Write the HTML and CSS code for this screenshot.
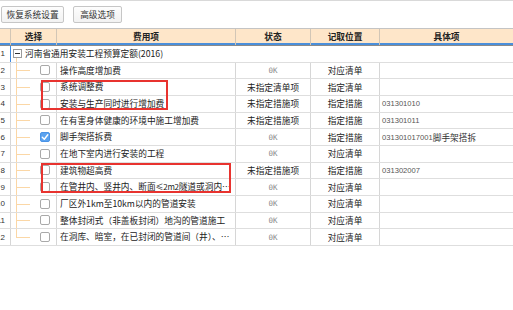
FILE: index.html
```html
<!DOCTYPE html>
<html lang="zh-CN">
<head>
<meta charset="utf-8">
<title>费用项设置</title>
<link rel="stylesheet" href="styles.css">
</head>
<body>
<div class="page">
  <div class="toolbar">
    <button class="btn btn-wide">恢复系统设置</button>
    <button class="btn btn-narrow">高级选项</button>
  </div>
  <div class="grid">
    <div class="row head">
      <div class="h"></div>
      <div class="h">选择</div>
      <div class="h">费用项</div>
      <div class="h">状态</div>
      <div class="h">记取位置</div>
      <div class="h">具体项</div>
    </div>
    <div class="row group">
      <div class="c num"><span>1</span></div>
      <div class="c grp"><span class="minus"></span><span class="grp-text">河南省通用安装工程预算定额(2016)</span></div>
    </div>
    <div class="row">
      <div class="c num"><span>2</span></div>
      <div class="c sel tree"><span class="cb"></span></div>
      <div class="c name">操作高度增加费</div>
      <div class="c status ok">0K</div>
      <div class="c pos">对应清单</div>
      <div class="c spec"></div>
    </div>
    <div class="row">
      <div class="c num"><span>3</span></div>
      <div class="c sel tree"><span class="cb"></span></div>
      <div class="c name">系统调整费</div>
      <div class="c status">未指定清单项</div>
      <div class="c pos">指定清单</div>
      <div class="c spec"></div>
    </div>
    <div class="row">
      <div class="c num"><span>4</span></div>
      <div class="c sel tree"><span class="cb"></span></div>
      <div class="c name">安装与生产同时进行增加费</div>
      <div class="c status">未指定措施项</div>
      <div class="c pos">指定措施</div>
      <div class="c spec">031301010</div>
    </div>
    <div class="row">
      <div class="c num"><span>5</span></div>
      <div class="c sel tree"><span class="cb"></span></div>
      <div class="c name">在有害身体健康的环境中施工增加费</div>
      <div class="c status">未指定措施项</div>
      <div class="c pos">指定措施</div>
      <div class="c spec">031301011</div>
    </div>
    <div class="row">
      <div class="c num"><span>6</span></div>
      <div class="c sel tree"><span class="cb checked"><svg viewBox="0 0 10 10" width="10" height="10"><path d="M2.3 5.2 L4.3 7.2 L7.8 2.8" fill="none" stroke="#fff" stroke-width="1.4" stroke-linecap="round" stroke-linejoin="round"/></svg></span></div>
      <div class="c name">脚手架搭拆费</div>
      <div class="c status ok">0K</div>
      <div class="c pos">指定措施</div>
      <div class="c spec">031301017001<span class="cjk">脚手架搭拆</span></div>
    </div>
    <div class="row">
      <div class="c num"><span>7</span></div>
      <div class="c sel tree"><span class="cb"></span></div>
      <div class="c name">在地下室内进行安装的工程</div>
      <div class="c status ok">0K</div>
      <div class="c pos">对应清单</div>
      <div class="c spec"></div>
    </div>
    <div class="row">
      <div class="c num"><span>8</span></div>
      <div class="c sel tree"><span class="cb"></span></div>
      <div class="c name">建筑物超高费</div>
      <div class="c status">未指定措施项</div>
      <div class="c pos">指定措施</div>
      <div class="c spec">031302007</div>
    </div>
    <div class="row">
      <div class="c num"><span>9</span></div>
      <div class="c sel tree"><span class="cb"></span></div>
      <div class="c name">在管井内、竖井内、断面<span class="sm">≤2m2</span>隧道或洞内进行安装的工程</div>
      <div class="c status ok">0K</div>
      <div class="c pos">对应清单</div>
      <div class="c spec"></div>
    </div>
    <div class="row">
      <div class="c num"><span>10</span></div>
      <div class="c sel tree"><span class="cb"></span></div>
      <div class="c name">厂区外1km至10km以内的管道安装</div>
      <div class="c status ok">0K</div>
      <div class="c pos">对应清单</div>
      <div class="c spec"></div>
    </div>
    <div class="row">
      <div class="c num"><span>11</span></div>
      <div class="c sel tree"><span class="cb"></span></div>
      <div class="c name">整体封闭式（非盖板封闭）地沟的管道施工</div>
      <div class="c status ok">0K</div>
      <div class="c pos">对应清单</div>
      <div class="c spec"></div>
    </div>
    <div class="row">
      <div class="c num"><span>12</span></div>
      <div class="c sel tree last"><span class="cb"></span></div>
      <div class="c name">在洞库、暗室，在已封闭的管道间（井）、地沟、吊顶内安装的工程</div>
      <div class="c status ok">0K</div>
      <div class="c pos">对应清单</div>
      <div class="c spec"></div>
    </div>
  </div>
  <div class="mark mark-1"></div>
  <div class="mark mark-2"></div>
</div>
</body>
</html>
```

FILE: styles.css
```css
html, body {
  margin: 0;
  padding: 0;
  background: #fff;
}

body {
  font-family: "Noto Sans CJK SC", "Liberation Sans", sans-serif;
  font-size: 8.7px;
  color: #222;
}

.page {
  position: relative;
  width: 513px;
  height: 310px;
  border-top: 1px solid #d9d9d9;
  box-sizing: border-box;
}

.toolbar {
  display: flex;
  padding: 5px 0 0 1px;
  height: 22px;
  box-sizing: border-box;
  gap: 9px;
}

.btn {
  height: 17px;
  padding: 0;
  border: 1px solid #c6c6c6;
  border-radius: 2px;
  background: linear-gradient(#fdfdfd, #f2f2f2);
  font-family: "Noto Sans CJK SC", sans-serif;
  font-size: 8.7px;
  color: #333;
  line-height: 15px;
}

.btn-wide { width: 63px; }
.btn-narrow { width: 49px; }

.grid {
  margin-top: 5px;
}

.row {
  display: grid;
  grid-template-columns: 11px 46px 179px 75px 69px 1fr;
  height: 16.67px;
  box-sizing: border-box;
  border-bottom: 1px solid #dedede;
}

.c {
  position: relative;
  display: flex;
  align-items: center;
  overflow: hidden;
  white-space: nowrap;
  border-right: 1px solid #d6d6d6;
  box-sizing: border-box;
}

.c:last-child { border-right: none; }

.head {
  height: 18px;
  border-top: 1px solid #c4c4c4;
  border-bottom: 1px solid #8a8a8a;
  background: #fee6c9;
  box-shadow: inset 0 -2px 0 #4a8fdb;
}

.h {
  display: flex;
  align-items: center;
  justify-content: center;
  padding-bottom: 2px;
  font-weight: bold;
  color: #222;
  border-right: 1px solid #d2c6b6;
  box-sizing: border-box;
  white-space: nowrap;
}

.h:last-child { border-right: none; }

.num {
  justify-content: flex-end;
  padding-right: 5px;
  font-family: "Liberation Sans", sans-serif;
  font-size: 8px;
  color: #333;
}

.num span { flex: none; }

.group .num { border-right: 1px solid #3d8ae0; }

.grp {
  grid-column: 2 / -1;
  padding-left: 2px;
  border-right: none;
}

.minus {
  position: relative;
  flex: none;
  width: 9px;
  height: 9px;
  border: 1px solid #9a9a9a;
  box-sizing: border-box;
  background: #fff;
  margin-right: 3px;
  z-index: 1;
}

.minus::before {
  content: "";
  position: absolute;
  left: 1px;
  right: 1px;
  top: 3px;
  height: 1px;
  background: #333;
}

.grp::after {
  content: "";
  position: absolute;
  left: 5px;
  top: 11px;
  bottom: 0;
  width: 1px;
  background: #fbd7a6;
}

.sel.tree { padding-left: 29px; }

.tree::before {
  content: "";
  position: absolute;
  left: 5px;
  top: 0;
  bottom: 0;
  width: 1px;
  background: #fbd7a6;
}

.tree.last::before { bottom: 50%; }

.tree::after {
  content: "";
  position: absolute;
  left: 5px;
  width: 14px;
  top: 50%;
  height: 1px;
  background: #fbd7a6;
}

.cb {
  display: flex;
  width: 10px;
  height: 10px;
  border: 1px solid #a9a9a9;
  border-radius: 2px;
  box-sizing: border-box;
  background: #fff;
}

.cb.checked {
  border-color: #4a93e6;
  background: #5aa2ef;
  align-items: center;
  justify-content: center;
}

.cb.checked svg { flex: none; margin: -1px; }

.name {
  display: block;
  padding-left: 3px;
  padding-right: 2px;
  line-height: 15.67px;
  text-overflow: ellipsis;
}

.sm {
  font-size: 8px;
  letter-spacing: -0.3px;
}

.status, .pos { justify-content: center; }

.ok {
  font-family: "DejaVu Sans Mono", monospace;
  font-size: 7.5px;
  color: #8a8a8a;
}

.spec {
  padding-left: 2px;
  font-family: "Liberation Sans", sans-serif;
  font-size: 7.6px;
  color: #555;
}

.spec .cjk {
  font-family: "Noto Sans CJK SC", sans-serif;
  font-size: 8.7px;
  color: #333;
}

.mark {
  position: absolute;
  border: 2px solid #e8332f;
  box-sizing: border-box;
  pointer-events: none;
}

.mark-1 {
  left: 41px;
  top: 79px;
  width: 127px;
  height: 30px;
}

.mark-2 {
  left: 41px;
  top: 162px;
  width: 190px;
  height: 30px;
}
```
